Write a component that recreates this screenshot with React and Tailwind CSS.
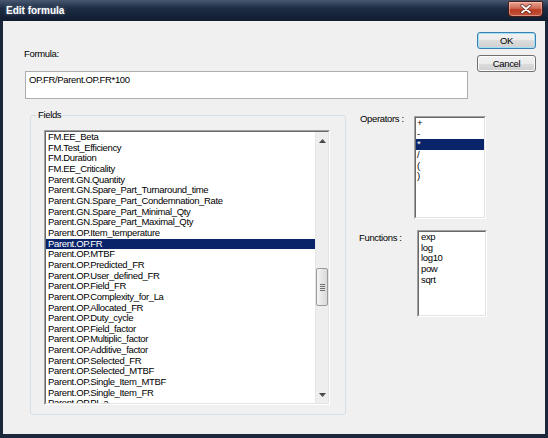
import React from "react";

const fields = [
  "FM.EE_Beta",
  "FM.Test_Efficiency",
  "FM.Duration",
  "FM.EE_Criticality",
  "Parent.GN.Quantity",
  "Parent.GN.Spare_Part_Turnaround_time",
  "Parent.GN.Spare_Part_Condemnation_Rate",
  "Parent.GN.Spare_Part_Minimal_Qty",
  "Parent.GN.Spare_Part_Maximal_Qty",
  "Parent.OP.Item_temperature",
  "Parent.OP.FR",
  "Parent.OP.MTBF",
  "Parent.OP.Predicted_FR",
  "Parent.OP.User_defined_FR",
  "Parent.OP.Field_FR",
  "Parent.OP.Complexity_for_La",
  "Parent.OP.Allocated_FR",
  "Parent.OP.Duty_cycle",
  "Parent.OP.Field_factor",
  "Parent.OP.Multiplic_factor",
  "Parent.OP.Additive_factor",
  "Parent.OP.Selected_FR",
  "Parent.OP.Selected_MTBF",
  "Parent.OP.Single_Item_MTBF",
  "Parent.OP.Single_Item_FR",
  "Parent.OP.PI_a",
];

const operators = ["+", "-", "*", "/", "(", ")"];
const functions = ["exp", "log", "log10", "pow", "sqrt"];

function ListBox({ className, children }) {
  return (
    <div
      className={`border-t border-l border-r border-b border-t-[#a0a0a0] border-l-[#a0a0a0] border-r-white border-b-white ${className}`}
    >
      <div className="h-full w-full border-t border-l border-r border-b border-t-[#696969] border-l-[#696969] border-r-[#e3e3e3] border-b-[#e3e3e3] bg-white flex overflow-hidden">
        {children}
      </div>
    </div>
  );
}

function Item({ label, selected, pad }) {
  return (
    <div
      className={`h-[10.67px] leading-[10.67px] whitespace-nowrap shrink-0 ${pad} ${
        selected ? "bg-[#0a246a] text-white" : "text-black"
      }`}
    >
      {label}
    </div>
  );
}

function Arrow({ up }) {
  return (
    <svg width="7" height="4" viewBox="0 0 7 4">
      {up ? (
        <path d="M0 4 L3.5 0 L7 4 Z" fill="#4a4a4a" />
      ) : (
        <path d="M0 0 L3.5 4 L7 0 Z" fill="#4a4a4a" />
      )}
    </svg>
  );
}

function Button({ children, isDefault }) {
  return (
    <div
      className={`h-[17px] rounded-[3px] border flex items-center justify-center leading-[10px] text-[9.5px] bg-[linear-gradient(#f2f2f2,#ebebeb_50%,#dddddd_50%,#cfcfcf)] ${
        isDefault
          ? "border-[#3c7fb1] shadow-[inset_0_0_0_1px_#9fe0f7]"
          : "border-[#707070] shadow-[inset_0_0_0_1px_#fbfbfb]"
      }`}
    >
      {children}
    </div>
  );
}

export default function App() {
  return (
    <div className="w-[548px] h-[438px] bg-[#1b283b] flex flex-col overflow-hidden font-['Liberation_Sans',Arial,sans-serif] text-[9.5px] tracking-[-0.35px] text-black">
      {/* Title bar */}
      <div className="h-[21px] shrink-0 flex items-start bg-[linear-gradient(#475870,#1d2c43_40%,#101c2f)]">
        <span className="ml-[6px] mt-[5px] text-[10px] leading-[12px] font-bold tracking-[0px] text-white [text-shadow:0_0_3px_rgba(200,220,255,0.45)]">
          Edit formula
        </span>
        <div className="ml-auto mr-[5px] mt-[1px] w-[35px] h-[16px] rounded-b-[4px] rounded-t-[1px] border border-[#4a1a14] bg-[linear-gradient(#e9a494,#d06a55_45%,#b93d24_55%,#c4533c)] flex items-center justify-center shadow-[inset_0_0_0_1px_rgba(255,220,210,0.45)]">
          <svg width="12" height="10" viewBox="0 0 12 10">
            <path d="M2 1.5 L10 8.5 M10 1.5 L2 8.5" stroke="#5a2018" strokeWidth="3.2" strokeLinecap="round" />
            <path d="M2 1.5 L10 8.5 M10 1.5 L2 8.5" stroke="#ffffff" strokeWidth="1.8" strokeLinecap="round" />
          </svg>
        </div>
      </div>

      {/* Client area */}
      <div className="flex-1 mx-[3px] mb-[4px] bg-[#f0f0f0] flex flex-col">
        {/* Top: formula and buttons */}
        <div className="flex pt-[11px]">
          <div className="flex-1 flex flex-col pl-[21px]">
            <div className="mt-[17px] leading-[10px]">Formula:</div>
            <div className="mt-[12px] ml-[1px] h-[28px] border border-[#abadb3] bg-white pl-[3px] pt-[3px] leading-[10px]">
              OP.FR/Parent.OP.FR*100
            </div>
          </div>
          <div className="ml-[9px] mr-[9px] w-[59px] flex flex-col gap-[6px]">
            <Button isDefault>OK</Button>
            <Button>Cancel</Button>
          </div>
        </div>

        {/* Bottom: fields and lists */}
        <div className="flex mt-[11px]">
          <fieldset className="ml-[27px] w-[316px] h-[305px] border border-[#d5dfe5] rounded-[3px] p-0 m-0 min-w-0">
            <legend className="ml-[6px] px-[1px] leading-[10px]">Fields</legend>
            <ListBox className="mt-[10px] ml-[13px] w-[286px] h-[275px]">
              <div className="flex-1 flex flex-col overflow-hidden">
                {fields.map((f) => (
                  <Item key={f} label={f} selected={f === "Parent.OP.FR"} pad="pl-[2px]" />
                ))}
              </div>
              <div className="w-[13px] shrink-0 flex flex-col bg-[#eeeeee] border-l border-[#e6e6e6]">
                <div className="h-[17px] flex items-center justify-center">
                  <Arrow up />
                </div>
                <div className="h-[119px]" />
                <div className="h-[38px] rounded-[2px] border border-[#9a9a9a] bg-[linear-gradient(90deg,#f4f4f4,#e6e6e6_50%,#d9d9d9)] flex flex-col items-center justify-center gap-[1px]">
                  <div className="w-[5px] h-px bg-[#6e6e6e]" />
                  <div className="w-[5px] h-px bg-[#6e6e6e]" />
                  <div className="w-[5px] h-px bg-[#6e6e6e]" />
                  <div className="w-[5px] h-px bg-[#6e6e6e]" />
                </div>
                <div className="flex-1" />
                <div className="h-[17px] flex items-center justify-center">
                  <Arrow />
                </div>
              </div>
            </ListBox>
          </fieldset>

          <div className="flex flex-col">
            <div className="flex mt-[4px]">
              <div className="ml-[14px] w-[54px] leading-[10px]">Operators :</div>
              <ListBox className="mt-[2px] w-[72px] h-[103px]">
                <div className="flex-1 flex flex-col">
                  {operators.map((o) => (
                    <Item key={o} label={o} selected={o === "*"} pad="pl-[1px]" />
                  ))}
                </div>
              </ListBox>
            </div>
            <div className="flex mt-[11px]">
              <div className="ml-[13px] mt-[3px] w-[58px] leading-[10px]">Functions :</div>
              <ListBox className="w-[70px] h-[87px]">
                <div className="flex-1 flex flex-col">
                  {functions.map((fn) => (
                    <Item key={fn} label={fn} selected={false} pad="pl-[2px]" />
                  ))}
                </div>
              </ListBox>
            </div>
          </div>
        </div>
      </div>
    </div>
  );
}
